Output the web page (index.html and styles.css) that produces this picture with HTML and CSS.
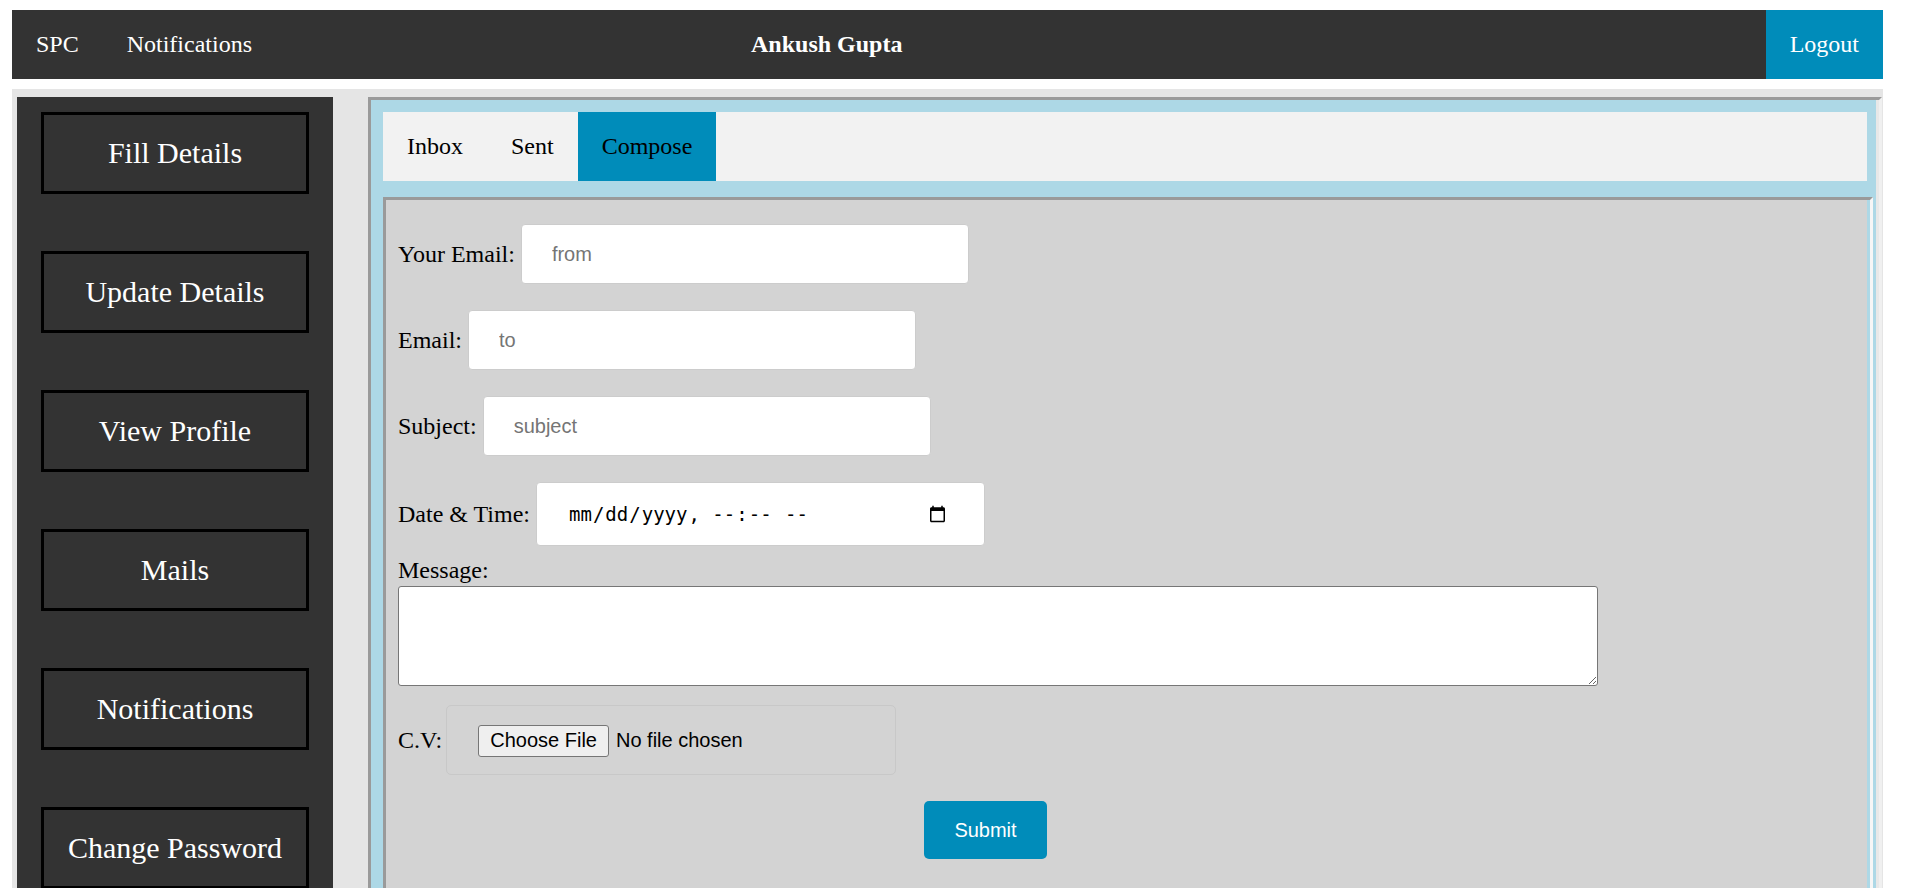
FILE: index.html
```html
<!DOCTYPE html>
<html lang="en">
<head>
<meta charset="utf-8">
<title>SPC - Compose</title>
<link rel="stylesheet" href="styles.css">
</head>
<body>
<nav class="topnav">
  <a class="nav-link" href="#">SPC</a>
  <a class="nav-link" href="#">Notifications</a>
  <span class="nav-user">Ankush Gupta</span>
  <a class="nav-logout" href="#">Logout</a>
</nav>
<div class="main">
  <aside class="sidebar">
    <a class="side-btn" href="#">Fill Details</a>
    <a class="side-btn" href="#">Update Details</a>
    <a class="side-btn" href="#">View Profile</a>
    <a class="side-btn" href="#">Mails</a>
    <a class="side-btn" href="#">Notifications</a>
    <a class="side-btn" href="#">Change Password</a>
  </aside>
  <section class="mail-frame">
    <div class="tabs">
      <a class="tab" href="#">Inbox</a>
      <a class="tab" href="#">Sent</a>
      <a class="tab tab-active" href="#">Compose</a>
    </div>
    <div class="compose-panel">
      <form class="compose-form">
        <div class="row">
          <label class="lbl">Your Email:</label>
          <input class="field" type="text" placeholder="from">
        </div>
        <div class="row">
          <label class="lbl">Email:</label>
          <input class="field" type="text" placeholder="to">
        </div>
        <div class="row">
          <label class="lbl">Subject:</label>
          <input class="field" type="text" placeholder="subject">
        </div>
        <div class="row">
          <label class="lbl">Date &amp; Time:</label>
          <input class="field field-date" type="datetime-local">
        </div>
        <label class="lbl lbl-block">Message:</label>
        <textarea class="message"></textarea>
        <div class="row row-cv">
          <label class="lbl">C.V:</label>
          <input class="file-field" type="file">
        </div>
        <button class="submit" type="button">Submit</button>
      </form>
    </div>
  </section>
</div>
</body>
</html>
```

FILE: styles.css
```css
html, body {
  background: #ffffff;
}

body {
  margin: 10px 12px 8px 12px;
  width: 1871px;
  font-family: "Liberation Serif", "Times New Roman", serif;
}

/* ---------- top navigation ---------- */
.topnav {
  display: flex;
  align-items: stretch;
  height: 69px;
  background: #333333;
}

.nav-link,
.nav-user,
.nav-logout {
  display: block;
  padding: 0 24px;
  line-height: 69px;
  font-size: 24px;
  color: #ffffff;
  text-decoration: none;
}

.nav-user {
  font-weight: bold;
  margin-left: 451px;
}

.nav-logout {
  margin-left: auto;
  background: #008cba;
}

/* ---------- main area ---------- */
.main {
  display: flex;
  align-items: stretch;
  margin-top: 10px;
  padding: 8px 1px 8px 5px;
  background: #e5e5e5;
}

.sidebar {
  flex: 0 0 316px;
  display: flex;
  flex-direction: column;
  padding: 15px 0 50px 0;
  background: #333333;
}

.side-btn {
  display: flex;
  align-items: center;
  justify-content: center;
  box-sizing: border-box;
  width: 268px;
  height: 82px;
  margin: 0 0 57px 24px;
  border: 3px solid #000000;
  font-size: 30px;
  color: #ffffff;
  text-decoration: none;
}

.side-btn:last-child {
  margin-bottom: 0;
}

/* ---------- mail frame ---------- */
.mail-frame {
  flex: 1 1 auto;
  display: flex;
  flex-direction: column;
  margin-left: 35px;
  padding: 12px 6px 0 12px;
  border-style: solid;
  border-width: 3px;
  border-color: #9a9a9a #f0f0f0 #f0f0f0 #9a9a9a;
  background: #add8e6;
  box-shadow: inset -3px 0 0 #e8e8e8;
}

.tabs {
  display: flex;
  height: 69px;
  margin-right: 6px;
  background: #f2f2f2;
}

.tab {
  display: block;
  padding: 0 24px;
  line-height: 69px;
  font-size: 24px;
  color: #000000;
  text-decoration: none;
}

.tab-active {
  background: #008cba;
}

.compose-panel {
  flex: 1 1 auto;
  margin-top: 16px;
  padding: 24px 12px 0 12px;
  border-style: solid;
  border-width: 3px 3px 0 3px;
  border-color: #9a9a9a #f6f6f6 #f6f6f6 #9a9a9a;
  background: #d3d3d3;
  box-shadow: inset -3px 0 0 #add8e6;
}

.compose-form {
  display: flex;
  flex-direction: column;
  align-items: flex-start;
}

.row {
  display: flex;
  align-items: center;
  gap: 6px;
  margin-bottom: 26px;
}

.lbl {
  font-size: 24px;
  line-height: 27px;
  color: #000000;
}

.field {
  box-sizing: border-box;
  width: 448px;
  height: 60px;
  margin: 0;
  padding: 0 30px;
  border: 1px solid #cccccc;
  border-radius: 4px;
  background: #ffffff;
  font-family: "Liberation Sans", Arial, sans-serif;
  font-size: 20px;
  color: #000000;
  outline: none;
}

.field::placeholder {
  color: #757575;
}

.field-date {
  width: 449px;
  height: 64px;
  padding: 0 35px 0 31px;
  font-family: "DejaVu Sans Mono", "Liberation Mono", monospace;
  font-size: 19px;
}

.row:nth-child(4) {
  margin-bottom: 11px;
}

.lbl-block {
  display: block;
}

.message {
  display: block;
  box-sizing: border-box;
  width: 1200px;
  height: 100px;
  margin: 2px 0 0 0;
  border: 1px solid #767676;
  border-radius: 3px;
  background: #ffffff;
}

.row-cv {
  margin-top: 19px;
  margin-bottom: 0;
  gap: 4px;
}

.file-field {
  box-sizing: border-box;
  width: 450px;
  height: 70px;
  padding: 18px 30px 18px 31px;
  border: 1px solid #c8c8c8;
  border-radius: 5px;
  font-family: "Liberation Sans", Arial, sans-serif;
  font-size: 20px;
  line-height: 32px;
  color: #000000;
}

.file-field::file-selector-button {
  height: 32px;
  margin-right: 7px;
  padding: 0 11px;
  border: 1px solid #767676;
  border-radius: 3px;
  background: #efefef;
  font-family: "Liberation Sans", Arial, sans-serif;
  font-size: 20px;
  color: #000000;
}

.submit {
  box-sizing: border-box;
  width: 123px;
  height: 58px;
  margin: 26px 0 0 526px;
  border: none;
  border-radius: 5px;
  background: #008cba;
  font-family: "Liberation Sans", Arial, sans-serif;
  font-size: 20px;
  color: #ffffff;
}
```
